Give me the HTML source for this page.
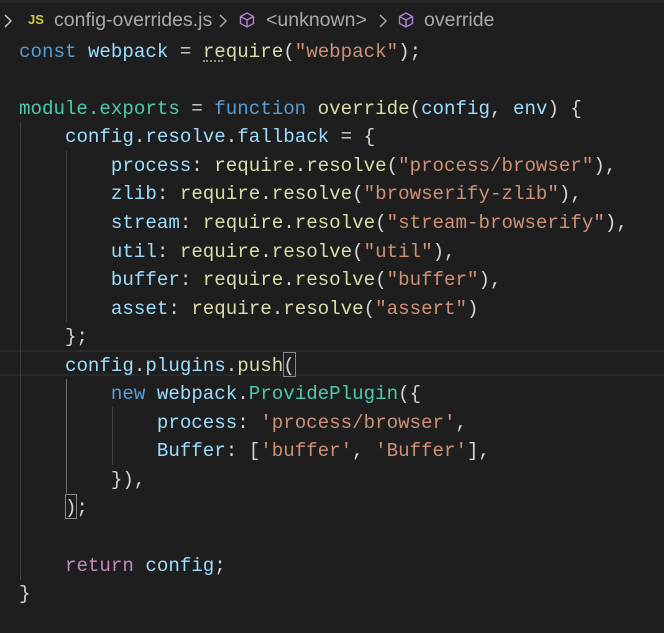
<!DOCTYPE html>
<html><head><style>
html,body{margin:0;padding:0;background:#1e1e1e;width:664px;height:633px;overflow:hidden;position:relative}
.bc{position:absolute;top:8px;left:0;height:24px;font:19.5px "Liberation Sans",sans-serif;color:#a9a9a9;white-space:pre}
.bc span{position:absolute;top:0;line-height:24px}
.code{position:absolute;left:19px;top:37.7px;font:19.15px/28.55px "Liberation Mono",monospace;color:#d4d4d4;white-space:pre}
.k{color:#569cd6}.v{color:#9cdcfe}.f{color:#dcdcaa}.s{color:#ce9178}.c{color:#4ec9b0}.p{color:#c586c0}
.g{position:absolute;width:1px;background:#404040}
.cur{position:absolute;left:0;top:350px;width:664px;height:26px;border-top:2px solid #282828;border-bottom:2px solid #282828;box-sizing:border-box}
.bx{position:absolute;border:1px solid #888;box-sizing:border-box}
.top{position:absolute;top:0;left:0;width:664px;height:3px;background:#252526}
.ch{position:absolute;top:13px}
</style></head><body>
<div class="top"></div>
<svg class="ch" style="left:3px" width="10" height="16" viewBox="0 0 10 16"><path d="M2 2 L8 8 L2 14" fill="none" stroke="#ccc" stroke-width="1.4"/></svg>
<svg class="ch" style="left:218px" width="10" height="16" viewBox="0 0 10 16"><path d="M2 2 L8 8 L2 14" fill="none" stroke="#aaa" stroke-width="1.4"/></svg>
<svg class="ch" style="left:378px" width="10" height="16" viewBox="0 0 10 16"><path d="M2 2 L8 8 L2 14" fill="none" stroke="#aaa" stroke-width="1.4"/></svg>
<div class="bc">
<span style="left:28px;color:#cbcb41;font-weight:bold;font-size:13px">JS</span>
<span style="left:54px">config-overrides.js</span>
<svg style="position:absolute;left:238px;top:3px" width="18" height="18" viewBox="0 0 18 18"><path d="M9 2 L15.5 5.5 V12.5 L9 16 L2.5 12.5 V5.5 Z M2.5 5.5 L9 9 L15.5 5.5 M9 9 V16" fill="none" stroke="#b180d7" stroke-width="1.4"/></svg>
<span style="left:266px">&lt;unknown&gt;</span>
<svg style="position:absolute;left:397px;top:3px" width="18" height="18" viewBox="0 0 18 18"><path d="M9 2 L15.5 5.5 V12.5 L9 16 L2.5 12.5 V5.5 Z M2.5 5.5 L9 9 L15.5 5.5 M9 9 V16" fill="none" stroke="#b180d7" stroke-width="1.4"/></svg>
<span style="left:424px">override</span>
</div>
<div class="cur"></div>
<div class="g" style="left:20px;top:122px;height:458px"></div>
<div class="g" style="left:66px;top:151px;height:171px"></div>
<div class="g" style="left:66px;top:379px;height:114px;background:#707070"></div>
<div class="g" style="left:112px;top:407px;height:58px"></div>
<div class="bx" style="left:283px;top:352px;height:25px;width:13px"></div>
<div class="bx" style="left:65px;top:494px;height:25px;width:12px"></div>
<div style="position:absolute;left:203px;top:60px;width:20px;border-top:2px dotted #888"></div>
<div class="code"><span class="k">const</span> <span class="v">webpack</span> = <span class="f">require</span>(<span class="s">"webpack"</span>);

<span class="c">module.exports</span> = <span class="k">function</span> <span class="f">override</span>(<span class="v">config</span>, <span class="v">env</span>) {
    <span class="v">config</span>.<span class="v">resolve</span>.<span class="v">fallback</span> = {
        <span class="v">process</span>: <span class="f">require</span>.<span class="f">resolve</span>(<span class="s">"process/browser"</span>),
        <span class="v">zlib</span>: <span class="f">require</span>.<span class="f">resolve</span>(<span class="s">"browserify-zlib"</span>),
        <span class="v">stream</span>: <span class="f">require</span>.<span class="f">resolve</span>(<span class="s">"stream-browserify"</span>),
        <span class="v">util</span>: <span class="f">require</span>.<span class="f">resolve</span>(<span class="s">"util"</span>),
        <span class="v">buffer</span>: <span class="f">require</span>.<span class="f">resolve</span>(<span class="s">"buffer"</span>),
        <span class="v">asset</span>: <span class="f">require</span>.<span class="f">resolve</span>(<span class="s">"assert"</span>)
    };
    <span class="v">config</span>.<span class="v">plugins</span>.<span class="f">push</span>(
        <span class="k">new</span> <span class="v">webpack</span>.<span class="c">ProvidePlugin</span>({
            <span class="v">process</span>: <span class="s">'process/browser'</span>,
            <span class="v">Buffer</span>: [<span class="s">'buffer'</span>, <span class="s">'Buffer'</span>],
        }),
    );

    <span class="p">return</span> <span class="v">config</span>;
}</div>
</body></html>
